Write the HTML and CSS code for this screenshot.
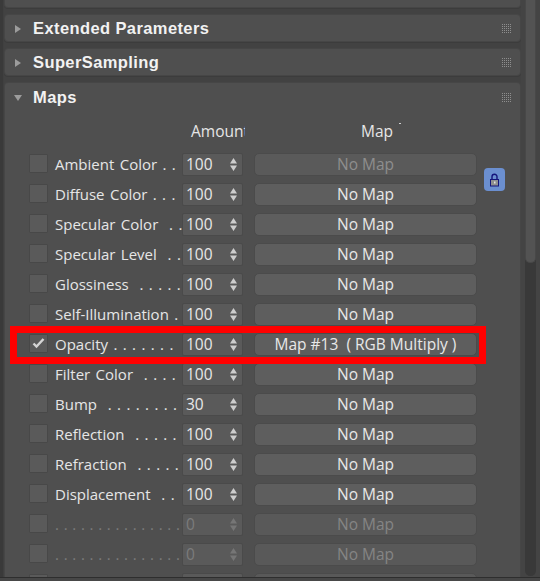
FILE: index.html
```html
<!DOCTYPE html>
<html>
<head>
<meta charset="utf-8">
<link rel="stylesheet" href="styles.css">
</head>
<body>
<div class="screen">
  <div class="edge"></div>
  <div class="rollouts">
    <div class="panel cut"></div>
    <div class="panel">
      <div class="ph"><span class="tri-r"></span><span class="ptitle">Extended Parameters</span><span class="grip"></span></div>
    </div>
    <div class="panel">
      <div class="ph"><span class="tri-r"></span><span class="ptitle">SuperSampling</span><span class="grip"></span></div>
    </div>
    <div class="panel maps">
      <div class="ph ph-open"><span class="tri-d"></span><span class="ptitle">Maps</span><span class="grip"></span></div>
      <div class="colhead">
        <span class="ch-amount">Amount</span>
        <span class="ch-map">Map<span class="tick"></span></span>
      </div>
      <div class="rows">
        <button class="lock" aria-label="lock">
          <svg width="21" height="23" viewBox="0 0 21 23"><path d="M8 12V8.7a2.5 2.5 0 0 1 5 0V12" fill="none" stroke="#14147c" stroke-width="1.4"/><rect x="6.5" y="11.5" width="8" height="6.5" fill="#8f8f8f" stroke="#14147c" stroke-width="1"/><rect x="10" y="13.5" width="1.5" height="2" fill="#e4e4e4"/></svg>
        </button>

        <div class="row"><span class="cb"></span><span class="lbl">Ambient Color . .</span><span class="spin"><span class="val">100</span><svg class="arr" width="7" height="13" viewBox="0 0 7 13"><path d="M0 5.5L3.5 0L7 5.5Z M0 7.5H7L3.5 13Z"/></svg></span><span class="btn dim">No Map</span></div>
        <div class="row"><span class="cb"></span><span class="lbl">Diffuse Color . . .</span><span class="spin"><span class="val">100</span><svg class="arr" width="7" height="13" viewBox="0 0 7 13"><path d="M0 5.5L3.5 0L7 5.5Z M0 7.5H7L3.5 13Z"/></svg></span><span class="btn">No Map</span></div>
        <div class="row"><span class="cb"></span><span class="lbl">Specular Color  . .</span><span class="spin"><span class="val">100</span><svg class="arr" width="7" height="13" viewBox="0 0 7 13"><path d="M0 5.5L3.5 0L7 5.5Z M0 7.5H7L3.5 13Z"/></svg></span><span class="btn">No Map</span></div>
        <div class="row"><span class="cb"></span><span class="lbl">Specular Level  . .</span><span class="spin"><span class="val">100</span><svg class="arr" width="7" height="13" viewBox="0 0 7 13"><path d="M0 5.5L3.5 0L7 5.5Z M0 7.5H7L3.5 13Z"/></svg></span><span class="btn">No Map</span></div>
        <div class="row"><span class="cb"></span><span class="lbl">Glossiness  . . . . .</span><span class="spin"><span class="val">100</span><svg class="arr" width="7" height="13" viewBox="0 0 7 13"><path d="M0 5.5L3.5 0L7 5.5Z M0 7.5H7L3.5 13Z"/></svg></span><span class="btn">No Map</span></div>
        <div class="row"><span class="cb"></span><span class="lbl">Self-Illumination .</span><span class="spin"><span class="val">100</span><svg class="arr" width="7" height="13" viewBox="0 0 7 13"><path d="M0 5.5L3.5 0L7 5.5Z M0 7.5H7L3.5 13Z"/></svg></span><span class="btn">No Map</span></div>
        <div class="row"><span class="cb"><svg width="17" height="17" viewBox="0 0 17 17"><path d="M3.5 8.5L6.5 11.5L13.5 4" fill="none" stroke="#d4d4d4" stroke-width="2.4"/></svg></span><span class="lbl">Opacity . . . . . . .</span><span class="spin"><span class="val">100</span><svg class="arr" width="7" height="13" viewBox="0 0 7 13"><path d="M0 5.5L3.5 0L7 5.5Z M0 7.5H7L3.5 13Z"/></svg></span><span class="btn">Map #13  ( RGB Multiply )</span></div>
        <div class="row"><span class="cb"></span><span class="lbl">Filter Color  . . . .</span><span class="spin"><span class="val">100</span><svg class="arr" width="7" height="13" viewBox="0 0 7 13"><path d="M0 5.5L3.5 0L7 5.5Z M0 7.5H7L3.5 13Z"/></svg></span><span class="btn">No Map</span></div>
        <div class="row"><span class="cb"></span><span class="lbl">Bump  . . . . . . . .</span><span class="spin"><span class="val">30</span><svg class="arr" width="7" height="13" viewBox="0 0 7 13"><path d="M0 5.5L3.5 0L7 5.5Z M0 7.5H7L3.5 13Z"/></svg></span><span class="btn">No Map</span></div>
        <div class="row"><span class="cb"></span><span class="lbl">Reflection  . . . . .</span><span class="spin"><span class="val">100</span><svg class="arr" width="7" height="13" viewBox="0 0 7 13"><path d="M0 5.5L3.5 0L7 5.5Z M0 7.5H7L3.5 13Z"/></svg></span><span class="btn">No Map</span></div>
        <div class="row"><span class="cb"></span><span class="lbl">Refraction  . . . . .</span><span class="spin"><span class="val">100</span><svg class="arr" width="7" height="13" viewBox="0 0 7 13"><path d="M0 5.5L3.5 0L7 5.5Z M0 7.5H7L3.5 13Z"/></svg></span><span class="btn">No Map</span></div>
        <div class="row"><span class="cb"></span><span class="lbl">Displacement  . .</span><span class="spin"><span class="val">100</span><svg class="arr" width="7" height="13" viewBox="0 0 7 13"><path d="M0 5.5L3.5 0L7 5.5Z M0 7.5H7L3.5 13Z"/></svg></span><span class="btn">No Map</span></div>
        <div class="row off"><span class="cb"></span><span class="lbl dots">. . . . . . . . . . . . . . .</span><span class="spin"><span class="val">0</span><svg class="arr" width="7" height="13" viewBox="0 0 7 13"><path d="M0 5.5L3.5 0L7 5.5Z M0 7.5H7L3.5 13Z"/></svg></span><span class="btn">No Map</span></div>
        <div class="row off"><span class="cb"></span><span class="lbl dots">. . . . . . . . . . . . . . .</span><span class="spin"><span class="val">0</span><svg class="arr" width="7" height="13" viewBox="0 0 7 13"><path d="M0 5.5L3.5 0L7 5.5Z M0 7.5H7L3.5 13Z"/></svg></span><span class="btn">No Map</span></div>
        <div class="row off"><span class="cb"></span><span class="lbl dots">. . . . . . . . . . . . . . .</span><span class="spin"><span class="val">0</span><svg class="arr" width="7" height="13" viewBox="0 0 7 13"><path d="M0 5.5L3.5 0L7 5.5Z M0 7.5H7L3.5 13Z"/></svg></span><span class="btn">No Map</span></div>

        <div class="highlight"></div>
      </div>
    </div>
  </div>
  <div class="scroll">
    <div class="track"><div class="thumb"></div></div>
  </div>
</div>
</body>
</html>
```
FILE: styles.css
```css
* { box-sizing: border-box; }
body {
  margin: 0;
  background: #474747;
  font-family: "Open Sans", "Noto Sans", sans-serif;
  color: #e6e6e6;
}
.screen {
  display: flex;
  height: 578px;
  overflow: hidden;
  background: #424242;
  border-bottom: 1px solid #2e2e2e;
}
.edge {
  width: 4px;
  flex: none;
  background: #3a3a3a;
  border-right: 1px solid #404040;
}
.rollouts {
  width: 517px;
  flex: none;
  display: flex;
  flex-direction: column;
  gap: 6px;
}
.panel {
  background: #4f4f4f;
  border: 1px solid #464646;
  border-radius: 4px;
  box-shadow: 0 1px 0 #3c3c3c;
}
.panel.cut {
  height: 8px;
  flex: none;
  border-top: none;
  border-radius: 0 0 4px 4px;
}
.panel.maps {
  flex: 1;
  border-bottom: none;
  border-radius: 4px 4px 0 0;
}
.ph {
  height: 26px;
  padding-top: 1px;
  display: flex;
  align-items: center;
}
.ph-open { height: 28px; }
.ptitle {
  font-family: "Liberation Sans", Arial, sans-serif;
  font-weight: bold;
  font-size: 16.5px;
  letter-spacing: 0.4px;
  color: #f2f2f2;
}
.tri-r {
  width: 0;
  height: 0;
  margin-left: 10px;
  margin-right: 12px;
  border-left: 6px solid #9c9c9c;
  border-top: 4px solid transparent;
  border-bottom: 4px solid transparent;
}
.tri-d {
  width: 0;
  height: 0;
  margin-left: 9px;
  margin-right: 11px;
  border-top: 6px solid #9c9c9c;
  border-left: 4px solid transparent;
  border-right: 4px solid transparent;
}
.grip {
  width: 9px;
  height: 9px;
  margin-left: auto;
  margin-right: 9px;
  background-image:
    linear-gradient(90deg, transparent 1px, #4f4f4f 1px),
    linear-gradient(#8e8e8e 1px, transparent 1px);
  background-size: 2px 2px;
}
.colhead {
  height: 38px;
  padding: 10px 0 0 24px;
  display: grid;
  grid-template-columns: 19px 134px 61px 234px;
  font-size: 15.5px;
  line-height: 20px;
  color: #e6e6e6;
}
.ch-amount {
  grid-column: 3;
  padding-left: 9px;
  margin-right: -2px;
  white-space: nowrap;
  overflow: hidden;
}
.ch-map {
  grid-column: 4;
  padding-left: 118px;
  white-space: nowrap;
}
.tick {
  display: inline-block;
  width: 2px;
  height: 1px;
  margin-left: 6px;
  background: #d0d0d0;
  vertical-align: 13px;
}
.rows {
  position: relative;
  padding-left: 24px;
  display: grid;
  grid-template-columns: 19px 134px 61px 234px 28px;
  grid-auto-rows: 30px;
  align-items: center;
}
.row { display: contents; }
.cb {
  grid-column: 1;
  width: 19px;
  height: 19px;
  margin-bottom: 2px;
  background: #5a5a5a;
  border: 1px solid #484848;
  border-radius: 1px;
  display: flex;
  align-items: center;
  justify-content: center;
}
.lbl {
  grid-column: 2;
  padding-left: 7px;
  font-size: 15px;
  line-height: 20px;
  word-spacing: 1.5px;
  white-space: pre;
  overflow: hidden;
  color: #e6e6e6;
}
.lbl.dots { word-spacing: 0.8px; }
.spin {
  grid-column: 3;
  height: 23px;
  background: #5a5a5a;
  border: 1px solid #4a4a4a;
  border-radius: 2px;
  display: flex;
  align-items: center;
  padding: 0 5px 0 3px;
  font-size: 15.5px;
  color: #e8e8e8;
}
.arr { margin-left: auto; fill: #cdcdcd; }
.btn {
  grid-column: 4;
  margin-left: 11px;
  height: 23px;
  background: #5e5e5e;
  border: 1px solid #4b4b4b;
  border-radius: 5px;
  display: flex;
  align-items: center;
  justify-content: center;
  font-size: 15.5px;
  color: #e8e8e8;
  white-space: pre;
}
.btn.dim { color: #8e8e8e; background: #5a5a5a; }
.row.off .lbl { color: #7c7c7c; }
.row.off .val { color: #7c7c7c; }
.row.off .arr { fill: #767676; }
.row.off .btn { color: #858585; background: #595959; }
.lock {
  grid-column: 5;
  grid-row: 1 / span 2;
  margin-left: 7px;
  width: 21px;
  height: 23px;
  padding: 0;
  border: none;
  border-radius: 4px;
  background: #6b8fd0;
  display: block;
}
.lock svg { display: block; }
.highlight {
  position: absolute;
  left: 5px;
  top: 177px;
  width: 476px;
  height: 38px;
  border: 7px solid #ff0000;
}
.scroll {
  width: 19px;
  flex: none;
  padding-left: 4px;
  background: #444444;
}
.track {
  width: 11px;
  height: 576px;
  background: #393939;
  border-radius: 0 0 6px 6px;
}
.thumb {
  height: 263px;
  background: #535353;
  border: 1px solid #484848;
  border-top: none;
  border-radius: 0 0 5px 5px;
}
```
